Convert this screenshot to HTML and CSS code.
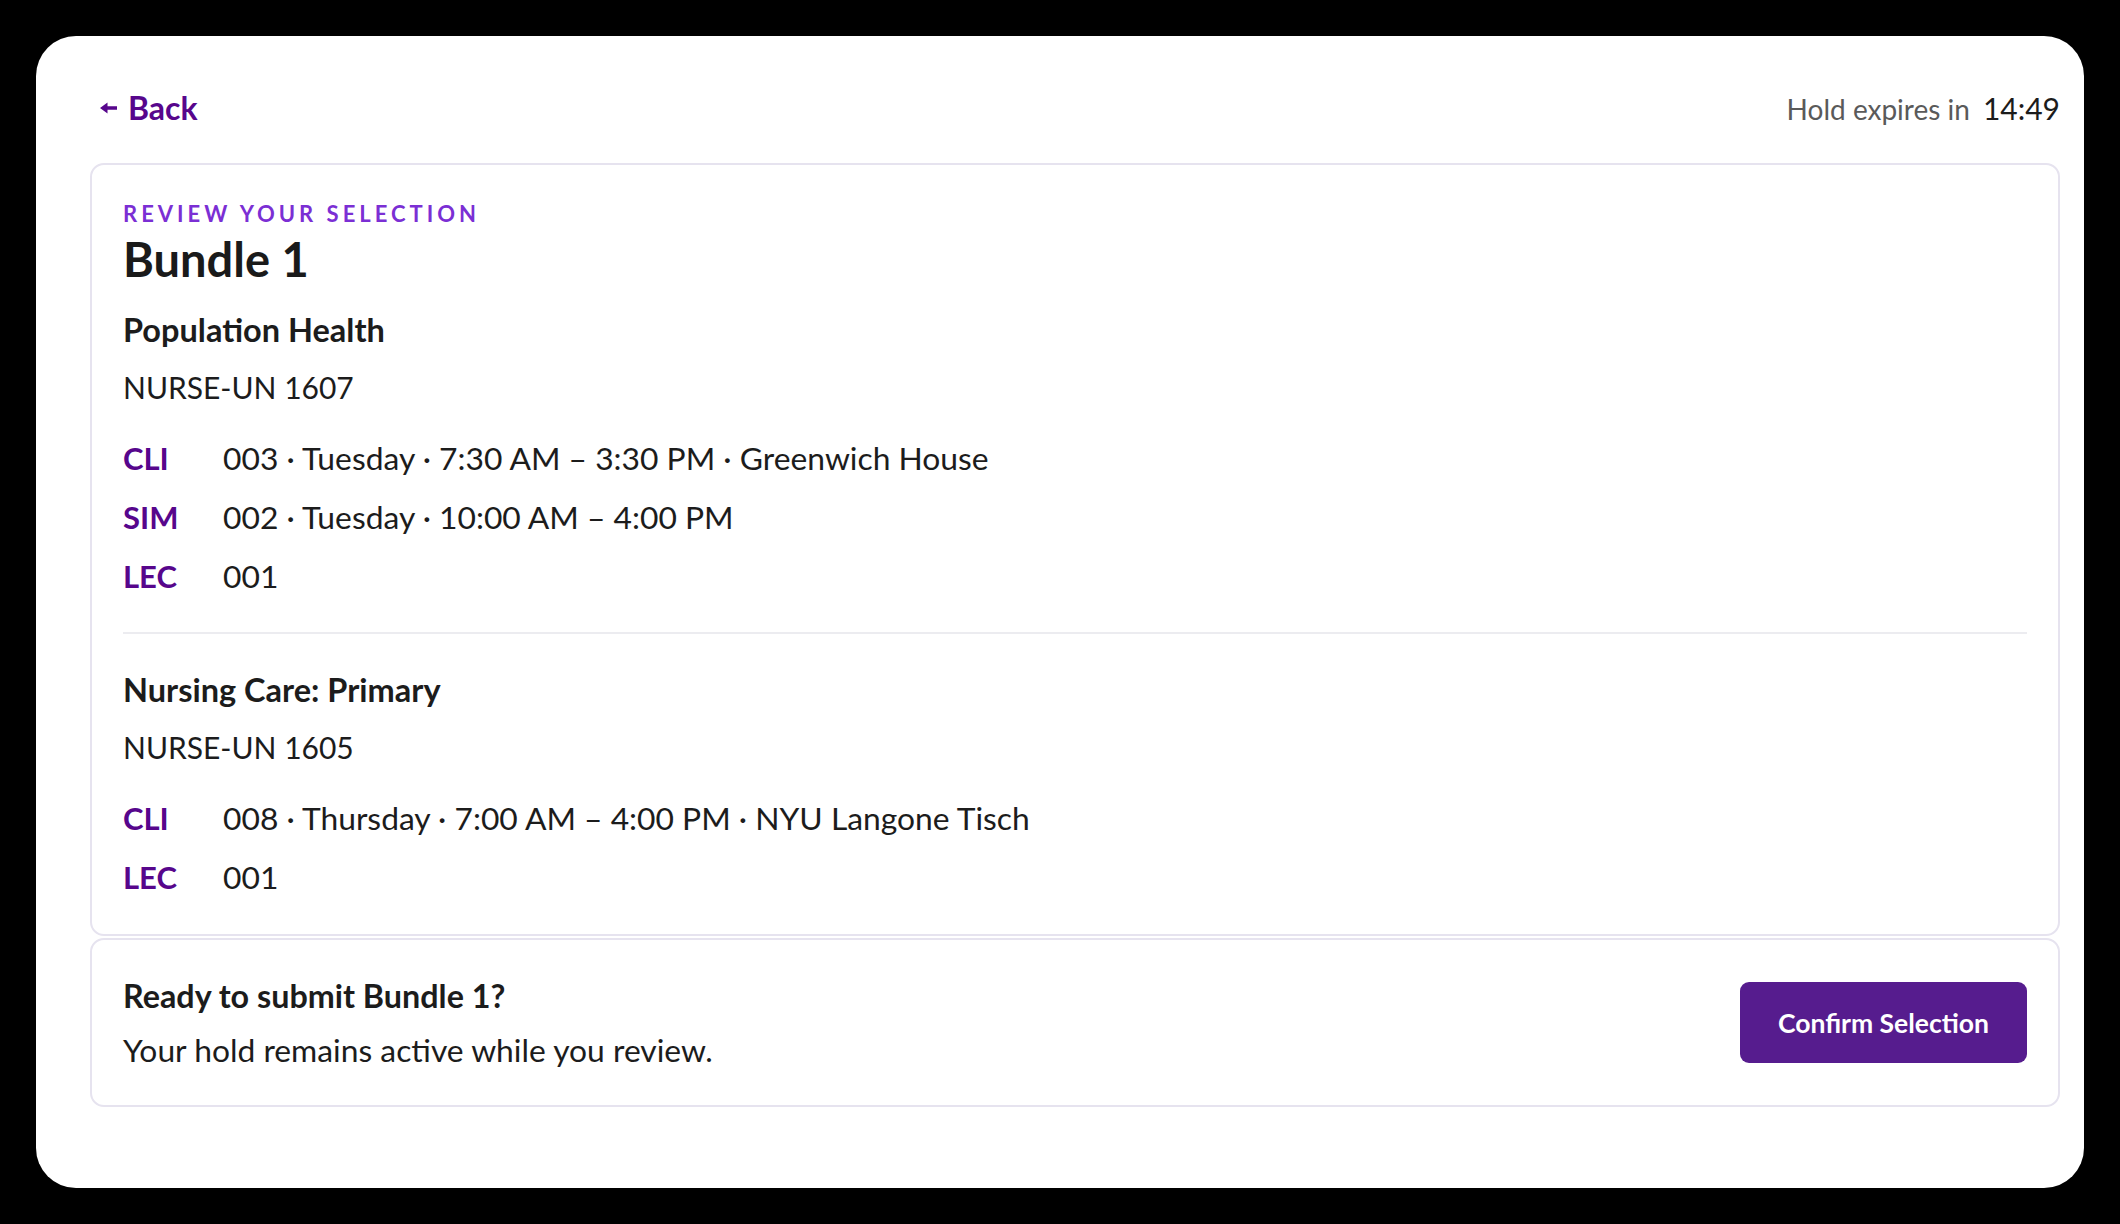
FILE: index.html
```html
<!DOCTYPE html>
<html lang="en">
<head>
<meta charset="utf-8">
<title>Review your selection</title>
<link rel="stylesheet" href="styles.css">
</head>
<body>
<main class="panel">
  <header class="topbar">
    <a class="back" href="#">
      <svg class="back-icon" viewBox="0 0 18 12" width="18" height="12" aria-hidden="true"><path d="M0 6 L7.5 0.5 L7.5 4.2 L17 4.2 L17 7.8 L7.5 7.8 L7.5 11.5 Z" fill="currentColor"/></svg>
      <span>Back</span>
    </a>
    <div class="hold">
      <span class="hold-label">Hold expires in</span>
      <span class="hold-time">14:49</span>
    </div>
  </header>

  <section class="card review">
    <div class="eyebrow">REVIEW YOUR SELECTION</div>
    <h1 class="title">Bundle 1</h1>

    <div class="course">
      <h2 class="course-name">Population Health</h2>
      <div class="course-code">NURSE-UN 1607</div>
      <div class="rows">
        <div class="row"><span class="tag">CLI</span><span class="val">003 · Tuesday · 7:30 AM – 3:30 PM · Greenwich House</span></div>
        <div class="row"><span class="tag">SIM</span><span class="val">002 · Tuesday · 10:00 AM – 4:00 PM</span></div>
        <div class="row"><span class="tag">LEC</span><span class="val">001</span></div>
      </div>
    </div>

    <hr class="divider">

    <div class="course">
      <h2 class="course-name">Nursing Care: Primary</h2>
      <div class="course-code">NURSE-UN 1605</div>
      <div class="rows">
        <div class="row"><span class="tag">CLI</span><span class="val">008 · Thursday · 7:00 AM – 4:00 PM · NYU Langone Tisch</span></div>
        <div class="row"><span class="tag">LEC</span><span class="val">001</span></div>
      </div>
    </div>
  </section>

  <section class="card submit">
    <div class="submit-text">
      <div class="submit-title">Ready to submit Bundle 1?</div>
      <div class="submit-desc">Your hold remains active while you review.</div>
    </div>
    <button class="confirm" type="button">Confirm Selection</button>
  </section>
</main>
</body>
</html>
```

FILE: styles.css
```css
* { box-sizing: border-box; }

html, body {
  margin: 0;
  background: #000;
}

body {
  padding: 36px;
  font-family: "Lato", "Liberation Sans", sans-serif;
  color: #1c1c1c;
}

.panel {
  background: #fff;
  border-radius: 40px;
  height: 1152px;
  padding: 42px 24px 0 54px;
}

.topbar {
  display: flex;
  align-items: center;
  justify-content: space-between;
  height: 60px;
  margin-bottom: 25px;
}

.back {
  display: flex;
  align-items: center;
  gap: 10px;
  padding-left: 10px;
  color: #57068c;
  text-decoration: none;
  font-weight: 700;
  font-size: 32px;
  line-height: 40px;
}

.back-icon { display: block; }

.hold {
  display: flex;
  align-items: baseline;
  gap: 13px;
}

.hold-label {
  font-size: 28px;
  color: #5a5a5a;
}

.hold-time {
  font-size: 30px;
  color: #1c1c1c;
}

.card {
  border: 2px solid #e6e3ef;
  border-radius: 14px;
  background: #fff;
}

.review {
  padding: 34px 31px 37px;
}

.eyebrow {
  font-size: 22px;
  line-height: 30px;
  font-weight: 700;
  letter-spacing: 4px;
  color: #7b2fd4;
}

.title {
  margin: 2px 0 0;
  font-size: 47px;
  line-height: 56px;
  font-weight: 700;
  color: #1a1a1a;
}

.course-name {
  margin: 23px 0 0;
  font-size: 32.5px;
  line-height: 40px;
  font-weight: 700;
}

.divider + .course .course-name { margin-top: 36px; }

.course-code {
  margin-top: 17px;
  font-size: 30px;
  line-height: 40px;
}

.rows {
  margin-top: 31px;
  display: flex;
  flex-direction: column;
  gap: 19px;
}

.row {
  display: grid;
  grid-template-columns: 100px 1fr;
  align-items: baseline;
  line-height: 40px;
}

.tag {
  font-size: 31px;
  font-weight: 700;
  color: #57068c;
}

.val {
  font-size: 31.8px;
}

.divider {
  border: 0;
  height: 2px;
  background: #ececf0;
  margin: 36px 0 0;
}

.submit {
  margin-top: 2px;
  height: 169px;
  display: flex;
  align-items: center;
  justify-content: space-between;
  padding: 0 31px;
}

.submit-title {
  font-size: 32.3px;
  line-height: 40px;
  font-weight: 700;
}

.submit-desc {
  margin-top: 14px;
  font-size: 31.8px;
  line-height: 40px;
}

.confirm {
  height: 81px;
  padding: 0 38px;
  border: 0;
  border-radius: 9px;
  background: #561c8e;
  color: #fff;
  font-family: inherit;
  font-size: 26.5px;
  font-weight: 700;
}
```
